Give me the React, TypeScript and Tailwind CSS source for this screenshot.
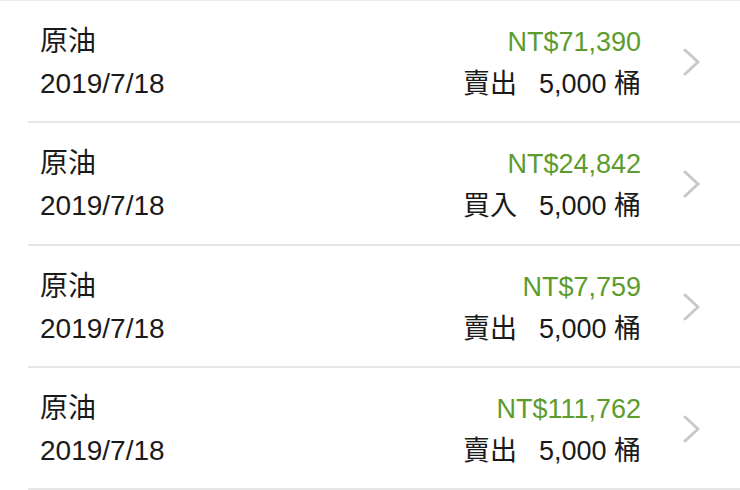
const rows = [
  { name: "原油", date: "2019/7/18", amount: "NT$71,390", side: "賣出", qty: "5,000", unit: "桶" },
  { name: "原油", date: "2019/7/18", amount: "NT$24,842", side: "買入", qty: "5,000", unit: "桶" },
  { name: "原油", date: "2019/7/18", amount: "NT$7,759", side: "賣出", qty: "5,000", unit: "桶" },
  { name: "原油", date: "2019/7/18", amount: "NT$111,762", side: "賣出", qty: "5,000", unit: "桶" },
];

function Chevron() {
  return (
    <svg width="18" height="28" viewBox="0 0 18 28" fill="none">
      <path d="M3 2l13 12L3 26" stroke="#c8c8cc" strokeWidth="3" strokeLinecap="round" strokeLinejoin="round" />
    </svg>
  );
}

export default function App() {
  return (
    <div
      className="w-[740px] h-[490px] bg-white overflow-hidden border-t border-[#ececec] text-[#1a1a1a]"
      style={{ fontFamily: '"Liberation Sans", "Noto Sans CJK TC", sans-serif' }}
    >
      {rows.map((r, i) => (
        <div key={i} className="pl-[28px]">
          <div className="h-[122.3px] flex items-center pl-[12px] pr-[40px] pt-[4px] border-b-2 border-[#e6e6e6]">
            <div className="flex flex-col text-[28px] leading-[42px]">
              <span>{r.name}</span>
              <span>{r.date}</span>
            </div>
            <div className="ml-auto flex flex-col items-end text-[27px] leading-[42px]">
              <span className="text-[#5c9c2c]">{r.amount}</span>
              <span className="flex">
                <span className="mr-[22px]">{r.side}</span>
                <span>{r.qty} {r.unit}</span>
              </span>
            </div>
            <div className="ml-[41px] flex items-center -mt-[2px]">
              <Chevron />
            </div>
          </div>
        </div>
      ))}
    </div>
  );
}
